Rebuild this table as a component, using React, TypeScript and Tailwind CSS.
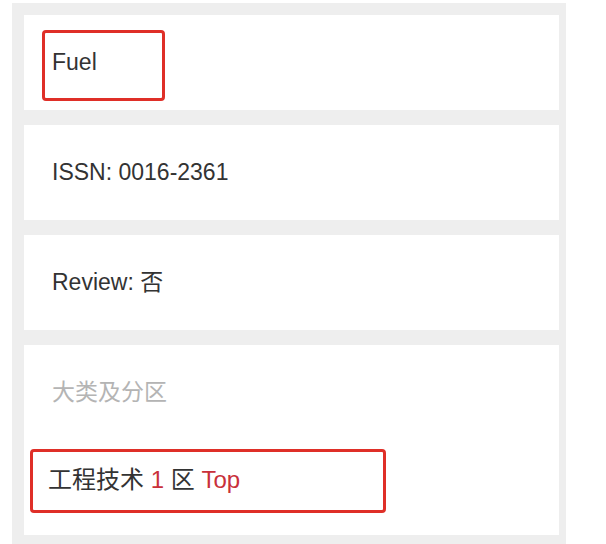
const font = { fontFamily: '"Liberation Sans", Arial, "Noto Sans CJK SC", sans-serif' };

function Card({ children, hl }: { children: React.ReactNode; hl?: boolean }) {
  return (
    <div className="relative flex h-[95px] items-center bg-white pl-[28px]">
      <span>{children}</span>
      {hl && (
        <div className="absolute left-[18px] top-[15px] h-[71px] w-[123px] rounded-[4px] border-[3px] border-[#df2f28]" />
      )}
    </div>
  );
}

export default function App() {
  return (
    <div className="min-h-[544px] bg-white" style={font}>
      <div className="ml-3 mt-[3px] flex w-[554px] flex-col gap-[15px] bg-[#eeeeee] pb-[9px] pl-3 pr-[7px] pt-3 text-[23px] text-[#333333]">
        <Card hl>Fuel</Card>
        <Card>ISSN: 0016-2361</Card>
        <Card>Review: 否</Card>
        <div className="relative h-[190px] bg-white">
          <div className="pl-[28px] pt-[32px] leading-[30px] text-[#b4b4b4]">大类及分区</div>
          <div className="mt-[58px] pl-[24px] text-[24px] leading-[30px]">
            工程技术 <span className="text-[#c9303a]">1</span> 区{" "}
            <span className="text-[#c9303a]">Top</span>
          </div>
          <div className="absolute left-[6px] top-[104px] h-[64px] w-[356px] rounded-[4px] border-[3px] border-[#df2f28]" />
        </div>
      </div>
    </div>
  );
}
